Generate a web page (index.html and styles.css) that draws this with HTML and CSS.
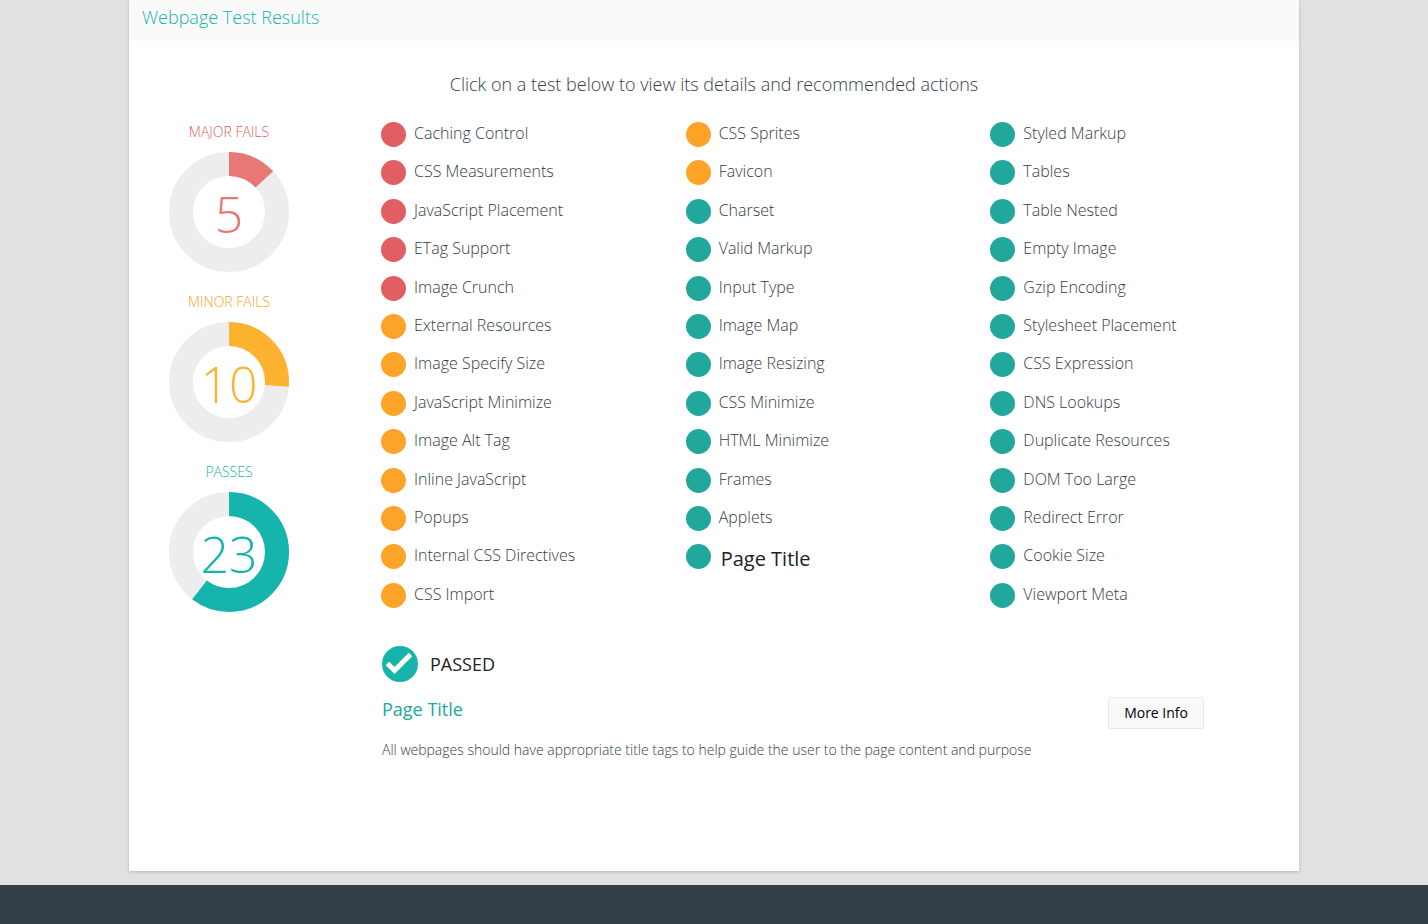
FILE: index.html
```html
<!DOCTYPE html>
<html lang="en">
<head>
<meta charset="utf-8">
<title>Webpage Test Results</title>
<link rel="stylesheet" href="styles.css">
</head>
<body>
<main class="card">
  <header class="card-header"><h1 class="card-title">Webpage Test Results</h1></header>
  <div class="card-body">
    <p class="intro">Click on a test below to view its details and recommended actions</p>
    <div class="results">
      <aside class="summary">
        <section class="score major">
          <h2 class="score-label">MAJOR FAILS</h2>
          <svg class="ring" viewBox="0 0 120 120" role="img" aria-label="5 major fails">
            <circle class="track" cx="60" cy="60" r="48"/>
            <circle class="value" cx="60" cy="60" r="48" pathLength="38" stroke-dasharray="5 33" transform="rotate(-90 60 60)"/>
            <text class="count" x="60" y="81">5</text>
          </svg>
        </section>
        <section class="score minor">
          <h2 class="score-label">MINOR FAILS</h2>
          <svg class="ring" viewBox="0 0 120 120" role="img" aria-label="10 minor fails">
            <circle class="track" cx="60" cy="60" r="48"/>
            <circle class="value" cx="60" cy="60" r="48" pathLength="38" stroke-dasharray="10 28" transform="rotate(-90 60 60)"/>
            <text class="count" x="60" y="81">10</text>
          </svg>
        </section>
        <section class="score passes">
          <h2 class="score-label">PASSES</h2>
          <svg class="ring" viewBox="0 0 120 120" role="img" aria-label="23 passes">
            <circle class="track" cx="60" cy="60" r="48"/>
            <circle class="value" cx="60" cy="60" r="48" pathLength="38" stroke-dasharray="23 15" transform="rotate(-90 60 60)"/>
            <text class="count" x="60" y="81">23</text>
          </svg>
        </section>
      </aside>
      <div class="tests">
        <div class="lists">
          <ul class="list">
            <li><button class="test fail">Caching Control</button></li>
            <li><button class="test fail">CSS Measurements</button></li>
            <li><button class="test fail">JavaScript Placement</button></li>
            <li><button class="test fail">ETag Support</button></li>
            <li><button class="test fail">Image Crunch</button></li>
            <li><button class="test warn">External Resources</button></li>
            <li><button class="test warn">Image Specify Size</button></li>
            <li><button class="test warn">JavaScript Minimize</button></li>
            <li><button class="test warn">Image Alt Tag</button></li>
            <li><button class="test warn">Inline JavaScript</button></li>
            <li><button class="test warn">Popups</button></li>
            <li><button class="test warn">Internal CSS Directives</button></li>
            <li><button class="test warn">CSS Import</button></li>
          </ul>
          <ul class="list">
            <li><button class="test warn">CSS Sprites</button></li>
            <li><button class="test warn">Favicon</button></li>
            <li><button class="test pass">Charset</button></li>
            <li><button class="test pass">Valid Markup</button></li>
            <li><button class="test pass">Input Type</button></li>
            <li><button class="test pass">Image Map</button></li>
            <li><button class="test pass">Image Resizing</button></li>
            <li><button class="test pass">CSS Minimize</button></li>
            <li><button class="test pass">HTML Minimize</button></li>
            <li><button class="test pass">Frames</button></li>
            <li><button class="test pass">Applets</button></li>
            <li><button class="test pass selected" aria-current="true">Page Title</button></li>
            <li></li>
          </ul>
          <ul class="list">
            <li><button class="test pass">Styled Markup</button></li>
            <li><button class="test pass">Tables</button></li>
            <li><button class="test pass">Table Nested</button></li>
            <li><button class="test pass">Empty Image</button></li>
            <li><button class="test pass">Gzip Encoding</button></li>
            <li><button class="test pass">Stylesheet Placement</button></li>
            <li><button class="test pass">CSS Expression</button></li>
            <li><button class="test pass">DNS Lookups</button></li>
            <li><button class="test pass">Duplicate Resources</button></li>
            <li><button class="test pass">DOM Too Large</button></li>
            <li><button class="test pass">Redirect Error</button></li>
            <li><button class="test pass">Cookie Size</button></li>
            <li><button class="test pass">Viewport Meta</button></li>
          </ul>
        </div>
        <section class="detail">
          <div class="status">
            <svg class="status-icon" viewBox="0 0 36 36" aria-hidden="true">
              <circle cx="18" cy="18" r="18" fill="#17b4ab"/>
              <path d="M5.500 17.500 12.500 24.500 28.500 8.500" fill="none" stroke="#fff" stroke-width="5"/>
            </svg>
            <span>PASSED</span>
          </div>
          <div class="detail-head">
            <h2 class="detail-title">Page Title</h2>
            <button class="more">More Info</button>
          </div>
          <p class="detail-text">All webpages should have appropriate title tags to help guide the user to the page content and purpose</p>
        </section>
      </div>
    </div>
  </div>
</main>
<footer class="footer"></footer>
</body>
</html>
```
FILE: styles.css
```css
* { box-sizing: border-box; }

body {
  display: flex;
  flex-direction: column;
  min-height: 100vh;
  margin: 0;
  background: #e1e1e1;
  color: #333d47;
  font-family: "Open Sans", sans-serif;
  font-weight: 300;
}

h1, h2, p, ul { margin: 0; padding: 0; font-weight: 300; }
ul { list-style: none; }
button { font: inherit; color: inherit; cursor: pointer; }

.card {
  width: 100%;
  max-width: 1170px;
  margin: 0 auto 14px;
  background: #fff;
  box-shadow: 0 1px 3px rgba(0, 0, 0, 0.2);
}
.card-header { padding: 5px 13px 12px; background: #fafafa; }
.card-title { color: #17b4ab; font-size: 18px; line-height: 24px; }
.card-body { padding: 30px 0 111px; }
.intro { font-size: 18px; line-height: 26px; text-align: center; }

.results {
  display: grid;
  grid-template-columns: 200px 1fr;
  gap: 52px;
  padding: 25px 4px 0 0;
}

.summary {
  display: flex;
  flex-direction: column;
  gap: 20px;
}
.score { display: flex; flex-direction: column; align-items: center; gap: 10px; color: var(--tone); }
.major { --tone: #e77876; }
.minor { --tone: #fdb32f; }
.passes { --tone: #15b4ad; }
.score-label { font-size: 14px; line-height: 20px; }
.major .score-label { color: #e15f63; }
.minor .score-label { color: #fda428; }
.ring { width: 120px; height: 120px; }
.track, .value { fill: none; stroke-width: 24px; }
.track { stroke: #ededed; }
.value { stroke: var(--tone); }
.count { fill: var(--tone); font-size: 50px; text-anchor: middle; }

.lists { display: grid; grid-template-columns: repeat(3, 1fr); }
.list {
  display: flex;
  flex-direction: column;
  justify-content: space-between;
  min-height: 486px;
}
.list li { height: 25px; }
.test {
  display: flex;
  align-items: flex-start;
  gap: 8px;
  padding: 0;
  border: 0;
  background: none;
  font-size: 16px;
  line-height: 22px;
}
.test::before {
  content: "";
  width: 25px;
  height: 25px;
  border-radius: 50%;
  background: var(--dot);
}
.fail { --dot: #e15f63; }
.warn { --dot: #fda428; }
.pass { --dot: #21a79b; }
.selected { gap: 10px; font-size: 20px; font-weight: 400; line-height: 30px; color: #222; }

.detail { padding: 38px 91px 0 1px; }
.status {
  display: flex;
  align-items: center;
  gap: 12px;
  color: #222;
  font-size: 18px;
  font-weight: 400;
}
.status-icon { width: 36px; height: 36px; }
.detail-head {
  display: flex;
  justify-content: space-between;
  align-items: flex-start;
  padding-top: 15px;
}
.detail-title { color: #21a79b; font-size: 18px; font-weight: 400; line-height: 24px; }
.more {
  padding: 5px 15px;
  border: 1px solid #e7e7e7;
  border-radius: 3px;
  background: #fafafa;
  color: #000;
  font-size: 14px;
  font-weight: 400;
  line-height: 20px;
}
.detail-text { padding-top: 11px; font-size: 14px; line-height: 20px; }

.footer { flex: 1; min-height: 39px; background: #353f48; }
```
